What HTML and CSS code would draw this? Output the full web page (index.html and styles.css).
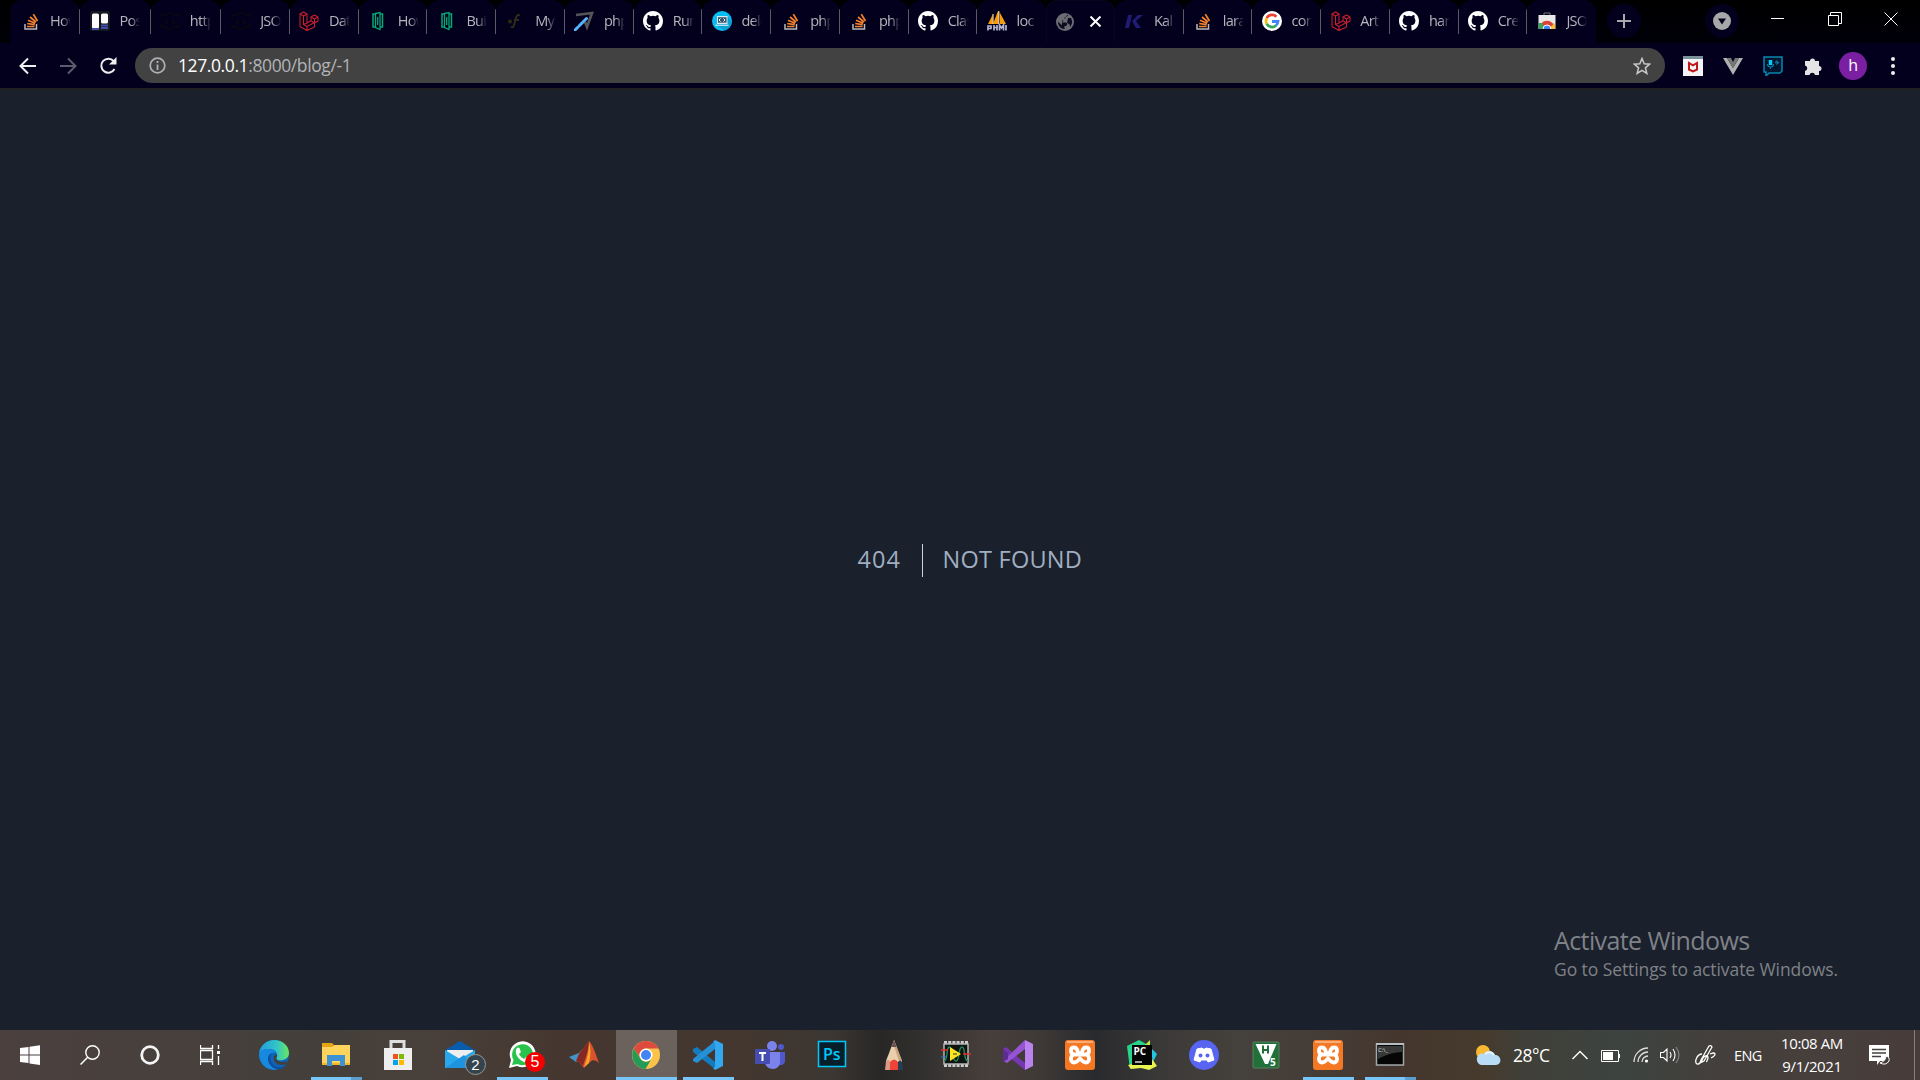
FILE: index.html
```html
<!DOCTYPE html>
<html lang="en">
<head>
<meta charset="utf-8">
<title>Not Found</title>
<link rel="stylesheet" href="styles.css">
</head>
<body>
<svg class="sprite" aria-hidden="true">
  <symbol id="so" viewBox="0 0 20 20"><path d="M4 13v5h11.500v-5" fill="none" stroke="#b9b9bd" stroke-width="1.500"/><path d="M6 15.500h7.500M6.200 12.500l7.500 1.200M7 9.300l7.200 3M9 6l6 5M12.300 3.200l4.200 6.800" stroke="#f4822a" stroke-width="1.700"/></symbol>
  <symbol id="trello" viewBox="0 0 20 20"><rect width="20" height="20" rx="2" fill="#151a20"/><rect x="2" y="2.500" width="7" height="15" rx="1.500" fill="#fff"/><rect x="11" y="2.500" width="7" height="10" rx="1.500" fill="#fff"/><path d="M2 18h7M11 14.500h7M11 17h7" stroke="#4251a7" stroke-width="2"/></symbol>
  <symbol id="json" viewBox="0 0 20 20"><path d="M1 7V4h5l2-2h4l2 2h5v3M1 13v3h5l2 2h4l2-2h5v-3M7 7v5H4M13 7v5h3" fill="none" stroke="#080812" stroke-width="1.700"/></symbol>
  <symbol id="laravel" viewBox="0 0 20 20"><path d="M1 3l3.500-2L8 3v9l4-2.300V6l3.500-2L19 6v4l-3.500 2v4L8 19.500 1 15.500zM1 3l3.500 2L8 3M4.500 5v8.500L8 12m4-6l3.500 2L19 6m-3.500 2v4L12 9.700M4.500 13.500l3.500 2 7.500-4M8 15.500v4" fill="none" stroke="#c9202b" stroke-width="1.050" stroke-linejoin="round"/></symbol>
  <symbol id="book" viewBox="0 0 20 20"><path d="M7 3H5v13h2M12 3h2.500v13H12" fill="none" stroke="#04a875" stroke-width="1.500"/><path d="M7.500 2.500L12 1.500v17l-4.500-2zM9.700 6v8" fill="none" stroke="#04a875" stroke-width="1.300"/></symbol>
  <symbol id="symfony" viewBox="0 0 20 20"><circle cx="4" cy="10.500" r="2" fill="#2d2914"/><path d="M14 4.500c-3-2-4 2-5 6-1 5-2 7-4 5M8 9h5" fill="none" stroke="#302b16" stroke-width="2"/></symbol>
  <symbol id="plane" viewBox="0 0 20 20"><path d="M2 4l16-2-5 14-2-5" fill="none" stroke="#555559" stroke-width="2.700"/><path d="M1 19l3-3M5.500 14.500l7-7" stroke="#56b4ff" stroke-width="3" stroke-linecap="round"/></symbol>
  <symbol id="github" viewBox="0 0 16 16"><path fill="#fff" d="M8 0C3.580 0 0 3.580 0 8c0 3.540 2.290 6.530 5.470 7.590.4.070.55-.17.55-.38 0-.19-.01-.82-.01-1.490-2.010.37-2.530-.49-2.690-.94-.09-.23-.48-.94-.82-1.130-.28-.15-.68-.52-.01-.53.63-.01 1.080.58 1.230.82.72 1.210 1.870.87 2.330.66.07-.52.28-.87.51-1.070-1.780-.2-3.640-.89-3.640-3.950 0-.87.31-1.590.82-2.150-.08-.2-.36-1.020.08-2.120 0 0 .67-.21 2.200.82a7.600 7.600 0 0 1 4 0c1.530-1.040 2.200-.82 2.200-.82.44 1.100.16 1.920.08 2.120.51.56.82 1.270.82 2.150 0 3.070-1.870 3.750-3.650 3.950.29.25.54.73.54 1.480 0 1.070-.01 1.930-.01 2.200 0 .21.15.46.55.38A8 8 0 0 0 16 8c0-4.420-3.580-8-8-8z"/></symbol>
  <symbol id="laptop" viewBox="0 0 20 20"><circle cx="10" cy="10" r="10" fill="#08bdf2"/><path d="M16 6l3.800 5a10 10 0 0 1-7 8.500L4 14z" fill="#07a0d0"/><rect x="5" y="5" width="10.500" height="8" fill="#dce9ef"/><rect x="6" y="6.200" width="8.500" height="5.500" fill="#35566d"/><path d="M8.500 7.500L7 9l1.500 1.500m3-3L13 9l-1.500 1.500M3.500 14.200h13" stroke="#fff" fill="none"/></symbol>
  <symbol id="pma" viewBox="0 0 20 20"><path d="M5.500 4L1 13h5zM11 0L6 13h5zM12.500 1l6.500 12h-6z" fill="#f89c0e"/><path d="M6 3v10M11.700 0v13" stroke="#ffd293" stroke-width="1.200"/><path d="M1 19.500V15h3v2.500H1M7 14v5.500m0-3h3M10 14v5.500m2.500 0V14l2 3 2-3v5.500m2.500 0V14" fill="none" stroke="#b4b4cf" stroke-width="1.700"/></symbol>
  <symbol id="globe" viewBox="0 0 20 20"><circle cx="10" cy="10" r="9" fill="#6b6b73"/><path d="M12.500 2.500c1 2-1 2-2 2.500-2 0 0 3-3 3.500H7v2h4c2 1 1 3 0 3.500H9.500V17C5 17 3 13 3 9.500l4 4v-3M13 6h3c2 4 1 6-1 9 0-3-1-3-3-4" fill="#0b0a20"/></symbol>
  <symbol id="kalk" viewBox="0 0 20 20"><path d="M4 4h4L5 17H1zM14 4h5l-7 6 5 7h-5l-4-7z" fill="#211c73"/></symbol>
  <symbol id="google" viewBox="0 0 20 20"><circle cx="10" cy="10" r="10" fill="#fff"/><g fill="none" stroke-width="2.800"><path d="M14.400 5.800A6 6 0 0 0 4.700 7.200" stroke="#ea4335"/><path d="M4.700 7.200a6 6 0 0 0 0 5.600" stroke="#fbbc05"/><path d="M4.700 12.800a6 6 0 0 0 9.300 1.700" stroke="#34a853"/><path d="M14 14.500a6 6 0 0 0 2-4H10" stroke="#4285f4"/></g></symbol>
  <symbol id="store" viewBox="0 0 20 20"><path d="M7 4V2h6v2" fill="none" stroke="#777"/><path d="M1.500 4h17v14h-17z" fill="#e9e9e9"/><path d="M2 17.800a8 8 0 0 1 16 0" fill="#db4437"/><path d="M2 12v6h6l-3-6z" fill="#34a853"/><path d="M18 12v6h-7z" fill="#fbc02d"/><path d="M6 18a4 4 0 0 1 8 0" fill="#4285f4" stroke="#fff"/></symbol>

  <symbol id="edge" viewBox="0 0 30 30"><defs><linearGradient id="eg"><stop stop-color="#219ddd"/><stop offset=".6" stop-color="#32c5c8"/><stop offset="1" stop-color="#6be75c"/></linearGradient></defs><circle cx="15" cy="15" r="15" fill="#0c65ba"/><path d="M0 14C1 5 8 0 15 0c9 0 15 6 15 13 0 6-6 8-11 7-3-1-1-3-1-5 0-4-4-6-8-6C5 9 1 11 0 14z" fill="url(#eg)"/><path d="M0 14c1-3 5-5 9-5 3 0 6 1 8 4-8-2-10 5-6 11 2 3 5 5 8 5-10 3-19-5-19-15z" fill="#1789df"/><path d="M13 14c-4 5 0 13 8 13 3 0 5-1 7-3-4 8-15 6-18-1-2-4-1-8 3-9z" fill="#104f9c"/><path d="M18 14c1 3-2 4 0 6 3 3 7 2 10 1l-1 3c-8 3-14-2-12-8z" fill="#463e3a"/></symbol>
  <symbol id="folder" viewBox="0 0 30 30"><path d="M1 3h10l2 2h15v20H1z" fill="#e4a413"/><path d="M1 7h10l3-2h15v20H1z" fill="#ffd45d"/><path d="M1 23h28v2H1z" fill="#edb62d"/><path d="M6 26V15h18v11h-5v-5h-8v5z" fill="#3d91d4"/></symbol>
  <symbol id="msstore" viewBox="0 0 30 30"><path d="M8 10V1.500h13V10" fill="none" stroke="#ddd" stroke-width="3"/><path d="M1 8h28v22H1z" fill="#eee"/><path d="M10 14h5v5h-5z" fill="#f25022"/><path d="M16 14h5v5h-5z" fill="#7fba00"/><path d="M10 20h5v5h-5z" fill="#00a4ef"/><path d="M16 20h5v5h-5z" fill="#ffb900"/></symbol>
  <symbol id="mail" viewBox="0 0 30 30"><path d="M0 10L15 1l15 9v18H0z" fill="#0a5baa"/><path d="M2 10h26v10H2z" fill="#eee"/><path d="M0 10l15 9 15-9v18H0z" fill="#28a8ea"/><path d="M0 28l19-13 11 13z" fill="#1e94e1"/></symbol>
  <symbol id="whatsapp" viewBox="0 0 30 30"><path d="M2 28l2-8a13 13 0 1 1 6 6z" fill="#fff"/><path d="M5 25l1.500-5a10.500 10.500 0 1 1 4.200 4z" fill="#27c34b"/><path d="M10 8c3-2 3 2 4 4l-2 2c1 2 3 4 5 5l2-2 4 2c0 4-5 4-8 2-5-3-8-9-5-13z" fill="#fff"/></symbol>
  <symbol id="matlab" viewBox="0 0 30 30"><path d="M0 17l10-4 6-6-5 13-4 2z" fill="#4295c9"/><path d="M10 14l10-13c4 4 7 14 10 22-3-3-6-4-9-1l-6 6-5-6-3-1z" fill="#d9532c"/><path d="M10 14l10-13c0 9-4 18-6 25l-4-4-3-1z" fill="#852823"/><path d="M20 2c2 6 2 13 0 21-2 1-3 3-5 4 3-8 5-16 5-25z" fill="#f7a52a"/></symbol>
  <symbol id="chrome" viewBox="0 0 30 30"><circle cx="15" cy="15" r="14" fill="#fbc34a"/><path d="M2.700 8.500A14 14 0 0 1 27.500 8.500H15A6.500 6.500 0 0 0 9 17.500z" fill="#dd4b3e"/><path d="M2.800 8.500A14 14 0 0 0 14.500 29l6.200-10.500A6.500 6.500 0 0 1 9.400 18.500z" fill="#249b57"/><circle cx="15" cy="15" r="6.500" fill="#fff"/><circle cx="15" cy="15" r="5" fill="#4384f3"/></symbol>
  <symbol id="vscode" viewBox="0 0 30 30"><path d="M0 9l4-2 18 15v7L0 12z" fill="#167bbd"/><path d="M22 1v8L4 23l-4-2v-2z" fill="#2590d6"/><path d="M22 0l8 4v22l-8 4-2-2 2-1V3l-2-1z" fill="#31a8ef"/></symbol>
  <symbol id="teams" viewBox="0 0 30 30"><circle cx="17" cy="6" r="5" fill="#7b83eb"/><circle cx="26" cy="7" r="3" fill="#5059c9"/><path d="M21 12h9v9c0 3-3 5-7 4z" fill="#5059c9"/><path d="M9 12h16v10c0 4-3 7-7 7s-8-3-8-7z" fill="#7b83eb"/><rect y="9" width="15" height="15" rx="1" fill="#454db0"/><path d="M4 13h7M7.500 13v8" stroke="#fff" stroke-width="2"/></symbol>
  <symbol id="pencil" viewBox="0 0 30 30"><path d="M15 0l8 21v9H7v-9z" fill="#e9cfaa"/><path d="M15 0l8 21h-3L15 6z" fill="#c9a37e"/><path d="M15 0l2.500 7h-5z" fill="#665250"/><path d="M7 21q2-2 4 0v9H6z" fill="#d99a81"/><path d="M11 22q4-5 8 0v8h-8z" fill="#ed4338"/><path d="M19 22q2-3 4 0l1 8h-5z" fill="#273e52"/></symbol>
  <symbol id="multisim" viewBox="0 0 30 30"><path d="M3 2.500h24M3 25.500h24" stroke="#ccc" stroke-width="3" stroke-dasharray="3 1.200"/><rect x="3" y="4" width="24" height="20" fill="#0d1412" stroke="#b5b5b5" stroke-width="1.500"/><path d="M3 21c4 0 2-13 5-14s3 14 7 14 2-14 6-14 1 14 6 14" fill="none" stroke="#278355" stroke-width="1.500"/><path d="M9 7l11 7-11 7z" fill="#ffe61e"/><path d="M12 14h4" stroke="#333"/><path d="M0 10h7M22 14h8" stroke="#e52929" stroke-width="1.500"/><path d="M0 17h6" stroke="#287bc7"/></symbol>
  <symbol id="vs" viewBox="0 0 30 30"><path d="M0 9l3-2 20 17-1 6L0 12z" fill="#7636b2"/><path d="M0 21L22 0v9L4 23z" fill="#9555d3"/><path d="M0 9l5 4v6l-5 3z" fill="#5c2d91"/><path d="M22 0l8 4v22l-8 4z" fill="#bb81ed"/></symbol>
  <symbol id="xampp" viewBox="0 0 30 30"><rect width="30" height="30" rx="3" fill="#f47824"/><path d="M2 2h26" stroke="#f8ad78" stroke-width="2"/><path d="M13.500 13.500C12.500 10 12 7.500 9 7.500c-4 0-4 6 0 7h12c4-1 4-7 0-7-3 0-3.500 2.500-4.500 6M9 14.500c-4 1-4 8 0 8 3 0 4-1.500 6-4 2 2.500 3 4 6 4 4 0 4-7 0-8" fill="none" stroke="#fff" stroke-width="3.800" stroke-linejoin="round"/></symbol>
  <symbol id="discord" viewBox="0 0 30 30"><circle cx="15" cy="15" r="15" fill="#5865f2"/><path d="M8 9l5-1 1 1h2l1-1 5 1 3 11-6 2-1-2h-6l-1 2-6-2z" fill="#fff" stroke="#fff" stroke-linejoin="round"/><circle cx="11.500" cy="15.500" r="2" fill="#5865f2"/><circle cx="18.500" cy="15.500" r="2" fill="#5865f2"/></symbol>
</svg>

<header class="browser">
  <div class="strip">
    <div class="tabs">
      <div class="tab wide first"><svg class="fav"><use href="#so"/></svg><span>How</span></div>
      <div class="tab wide"><svg class="fav"><use href="#trello"/></svg><span>Post</span></div>
      <div class="tab wide"><svg class="fav"><use href="#json"/></svg><span>http</span></div>
      <div class="tab"><svg class="fav"><use href="#json"/></svg><span>JSO</span></div>
      <div class="tab"><svg class="fav"><use href="#laravel"/></svg><span>Dat</span></div>
      <div class="tab"><svg class="fav"><use href="#book"/></svg><span>How</span></div>
      <div class="tab"><svg class="fav"><use href="#book"/></svg><span>Buil</span></div>
      <div class="tab"><svg class="fav"><use href="#symfony"/></svg><span>My</span></div>
      <div class="tab"><svg class="fav"><use href="#plane"/></svg><span>php</span></div>
      <div class="tab"><svg class="fav"><use href="#github"/></svg><span>Run</span></div>
      <div class="tab"><svg class="fav"><use href="#laptop"/></svg><span>dele</span></div>
      <div class="tab"><svg class="fav"><use href="#so"/></svg><span>php</span></div>
      <div class="tab"><svg class="fav"><use href="#so"/></svg><span>php</span></div>
      <div class="tab"><svg class="fav"><use href="#github"/></svg><span>Clas</span></div>
      <div class="tab before"><svg class="fav"><use href="#pma"/></svg><span>loc</span></div>
      <div class="tab active"><svg class="fav"><use href="#globe"/></svg><svg class="close" viewBox="0 0 10 10"><path d="M.5.5l9 9m0-9l-9 9" stroke="#fff" stroke-width="1.800"/></svg></div>
      <div class="tab"><svg class="fav"><use href="#kalk"/></svg><span>Kal</span></div>
      <div class="tab"><svg class="fav"><use href="#so"/></svg><span>lara</span></div>
      <div class="tab"><svg class="fav"><use href="#google"/></svg><span>con</span></div>
      <div class="tab"><svg class="fav"><use href="#laravel"/></svg><span>Art</span></div>
      <div class="tab"><svg class="fav"><use href="#github"/></svg><span>har</span></div>
      <div class="tab"><svg class="fav"><use href="#github"/></svg><span>Cre</span></div>
      <div class="tab last"><svg class="fav"><use href="#store"/></svg><span>JSO</span></div>
    </div>
    <div class="round plus"><svg width="16" height="16"><path d="M8 1v14M1 8h14" stroke="#a9a9ad" stroke-width="2"/></svg></div>
    <div class="round search"><svg width="18" height="18"><circle cx="9" cy="9" r="9" fill="#a7a7a9"/><path d="M5 6.500h8L9 12.500z" fill="#03001c"/></svg></div>
    <div class="window-buttons">
      <svg width="14" height="14"><path d="M0 6.500h13" stroke="#fff"/></svg>
      <svg width="14" height="14"><path d="M.5 3.500h10v10H.5zM2.500 3V.5h11v11H11" fill="none" stroke="#fff"/></svg>
      <svg width="14" height="14"><path d="M.5.500l13 13m0-13l-13 13" stroke="#fff"/></svg>
    </div>
  </div>
  <div class="toolbar">
    <div class="nav">
      <svg width="18" height="18"><path d="M17 9H2m7-7.500L1.500 9 9 16.500" fill="none" stroke="#eee" stroke-width="2"/></svg>
      <svg width="18" height="18"><path d="M1 9h15M9 1.500L16.500 9 9 16.500" fill="none" stroke="#5c5c6c" stroke-width="2"/></svg>
      <svg width="18" height="18"><path d="M14.700 4.200A7 7 0 1 0 15.500 12" fill="none" stroke="#eee" stroke-width="2"/><path d="M17.500 0v7.500H10z" fill="#eee"/></svg>
    </div>
    <div class="omnibox">
      <svg width="17" height="17"><circle cx="8.500" cy="8.500" r="7.300" fill="none" stroke="#adb0b4" stroke-width="1.700"/><path d="M8.500 7.500V13M8.500 4v2" stroke="#adb0b4" stroke-width="1.800"/></svg>
      <div class="url"><b>127.0.0.1</b>:8000/blog/-1</div>
      <svg class="star" width="18" height="18"><path d="M9 1.500l2.200 5.300 5.500.4-4.300 3.600 1.400 5.600L9 13.300l-4.800 3.100 1.400-5.600-4.300-3.600 5.500-.4z" fill="none" stroke="#c9c9c9" stroke-width="1.500"/></svg>
    </div>
    <div class="extensions">
      <svg width="20" height="20"><path d="M0 0h20v20H0z" fill="#f4f4f4"/><path d="M0 0h20v3H0z" fill="#78919b"/><path d="M6 13.500V7l4 2.300L14 7v6.500l-4 1.800z" fill="none" stroke="#c01818" stroke-width="2"/></svg>
      <svg width="20" height="20"><path d="M0 2h4l6 10 6-10h4L10 19z" fill="#b0b0b0"/><path d="M4 2h4l2 4 2-4h4l-6 10z" fill="#777"/></svg>
      <svg width="20" height="20"><path d="M1 1h18v14l-2 2H6l-3 3v-4H1z" fill="#03152e" stroke="#0587af" stroke-width="1.500"/><path d="M7.500 4v5" stroke="#08caff" stroke-width="3.500"/><path d="M4.500 8c0 4 6 4 6 0M7.500 11v2M12 7l2-2v3l2-2" fill="none" stroke="#087da6" stroke-width="1.100"/></svg>
      <svg width="20" height="20"><path d="M2 5h5a2.500 2.500 0 1 1 5 0h4v5a2.500 2.500 0 1 1 0 5v4h-4a2.800 2.800 0 0 0-5.500 0H2v-4a2.800 2.800 0 0 0 0-5.500z" fill="#e4e4e6"/></svg>
      <div class="avatar">h</div>
      <svg width="20" height="20"><g fill="#eee"><circle cx="10" cy="3" r="2"/><circle cx="10" cy="10" r="2"/><circle cx="10" cy="17" r="2"/></g></svg>
    </div>
  </div>
</header>

<main class="page">
  <div class="error"><div class="code">404</div><div class="message">NOT FOUND</div></div>
  <aside class="watermark"><div class="wm-title">Activate Windows</div><div class="wm-text">Go to Settings to activate Windows.</div></aside>
</main>

<footer class="taskbar">
  <div class="system">
    <svg width="20" height="20"><path d="M0 3l8.500-1v7.500H0zM9.500 1.800L20 .3v9.200H9.500zM0 10.500h8.500V18L0 17zM9.500 10.500H20V20L9.500 18.500z" fill="#fff"/></svg>
    <svg width="20" height="20"><circle cx="12.500" cy="7.500" r="6.700" fill="none" stroke="#fff" stroke-width="1.400"/><path d="M7.700 12.300L.5 19.500" stroke="#fff" stroke-width="1.500"/></svg>
    <svg width="20" height="20"><circle cx="10" cy="10" r="8.300" fill="none" stroke="#f4f4f4" stroke-width="2.800"/></svg>
    <svg width="20" height="20"><path d="M.5 0v3.500h12V0M.5 5.500h12v9H.5zM.5 20v-3.500h12V20M18.500 0v4M18.500 11v9" fill="none" stroke="#fff" stroke-width="1.300"/><path d="M17 6h3v3h-3z" fill="#fff"/></svg>
  </div>
  <div class="apps">
    <div class="app"><svg><use href="#edge"/></svg></div>
    <div class="app open multi"><svg><use href="#folder"/></svg></div>
    <div class="app"><svg><use href="#msstore"/></svg></div>
    <div class="app"><svg><use href="#mail"/></svg><i class="badge dark">2</i></div>
    <div class="app open"><svg><use href="#whatsapp"/></svg><i class="badge red">5</i></div>
    <div class="app"><svg><use href="#matlab"/></svg></div>
    <div class="app open current"><svg><use href="#chrome"/></svg></div>
    <div class="app open"><svg><use href="#vscode"/></svg></div>
    <div class="app"><svg><use href="#teams"/></svg></div>
    <div class="app"><svg viewBox="0 0 30 30"><rect x="1.500" y="1.500" width="27" height="25" fill="#061e2a" stroke="#00c8ff" stroke-width="1.500"/><text x="6" y="20" font-size="16" font-weight="600" fill="#00c8ff">Ps</text></svg></div>
    <div class="app"><svg><use href="#pencil"/></svg></div>
    <div class="app"><svg><use href="#multisim"/></svg></div>
    <div class="app"><svg><use href="#vs"/></svg></div>
    <div class="app"><svg><use href="#xampp"/></svg></div>
    <div class="app"><svg viewBox="0 0 30 30"><path d="M0 6L12 0l9 5-3 17L3 29z" fill="#28d48b"/><path d="M18 5l5-5v7z" fill="#b7ec42"/><path d="M23 7l7 7-4 8z" fill="#21c7e2"/><path d="M1 25l24-6 5 7-8 4-8-2-10 1z" fill="#e9f44f"/><rect x="5" y="5" width="20" height="20" fill="#050505"/><text x="6.500" y="15" font-size="10" font-weight="700" fill="#fff">PC</text><path d="M8 22h7" stroke="#fff" stroke-width="1.300"/></svg></div>
    <div class="app"><svg><use href="#discord"/></svg></div>
    <div class="app"><svg viewBox="0 0 30 30"><rect x="2" y="2" width="26" height="26" rx="1" fill="#216f39" stroke="#59815f"/><path d="M4.500 4h21L17 24h-3z" fill="#fff"/><path d="M12 5.500v8m0-3.500h5m0-4.500v8" fill="none" stroke="#216f39" stroke-width="2"/><text x="19" y="25.500" font-size="10" font-weight="700" fill="#fff">5</text></svg></div>
    <div class="app open"><svg><use href="#xampp"/></svg></div>
    <div class="app open multi"><svg viewBox="0 0 30 30"><rect x="1.500" y="4" width="27" height="21" fill="#060606" stroke="#a1a8ab" stroke-width="1.500"/><path d="M3 6h24v6Q16 12 3 19z" fill="#373838"/><path d="M1 4h28" stroke="#b5bdc0" stroke-width="2"/><text x="3" y="12" font-size="6" fill="#ddd">C:\_</text></svg></div>
  </div>
  <div class="tray">
    <svg class="weather" width="26" height="20"><circle cx="8" cy="7" r="7" fill="#f8b832"/><path d="M6 20a6 6 0 0 1-1-11c2-1 3 0 4 0 2-4 9-4 11 1 7 0 7 10 1 10z" fill="#b8dcf6"/><path d="M10 9c3-3 7-2 9 1" stroke="#e5f3fd" fill="none" stroke-width="2"/></svg>
    <div class="temp">28°C</div>
    <svg class="chevron" width="16" height="10"><path d="M.5 9L8 1.500 15.500 9" fill="none" stroke="#fff" stroke-width="1.400"/></svg>
    <svg class="battery" width="19" height="12"><path d="M.5.5h17v11H.5z" fill="none" stroke="#fff"/><path d="M2 2h10v8H2zM18 4h1v4h-1z" fill="#fff"/></svg>
    <svg class="wifi" width="16" height="16"><path d="M1 15A14 14 0 0 1 15 1M5 15A10 10 0 0 1 15 5M9 15a6 6 0 0 1 6-6" fill="none" stroke="#ddd" stroke-width="1.300"/><circle cx="13.500" cy="14" r="1.600" fill="#fff"/></svg>
    <svg class="volume" width="21" height="18"><path d="M.5 6.500h3L7 3v12l-3.500-3.500h-3zM10 6q2 3 0 6m3-9q4 6 0 12" fill="none" stroke="#fff" stroke-width="1.100"/><path d="M16 1q6 8 0 16" fill="none" stroke="#888" stroke-width="1.100"/></svg>
    <svg class="pen" width="21" height="20"><path d="M6 15L14 1q2-1 3 1L9 16l-4 2zM7 9c-5 0-8 8-5 10 2 1 5-3 6-6 2-3 5-3 5 0 0 2-2 3-1 4m3-8q5-2 5 0t-4 4" fill="none" stroke="#fff" stroke-width="1.300"/></svg>
    <div class="lang">ENG</div>
    <div class="clock"><div>10:08 AM</div><div>9/1/2021</div></div>
    <svg class="notes" width="21" height="21"><path d="M0 0h20v16h-9l-3 4v-4H0z" fill="#fff"/><path d="M3 4.500h14M3 8h14M3 11.500h9" stroke="#45403d" stroke-width="1.300"/><path d="M17 11q0 5-6 7 6 3 9-2 1-4-3-5z" fill="#45403d" stroke="#fff"/></svg>
    <div class="desktop"></div>
  </div>
</footer>
</body>
</html>
```

FILE: styles.css
```css
* { box-sizing: border-box; }
body {
  margin: 0;
  width: 1920px;
  height: 1080px;
  overflow: hidden;
  display: flex;
  flex-direction: column;
  background: #1a202c;
  font-family: "Open Sans", "Noto Sans", sans-serif;
}
svg { display: block; flex: none; }
.sprite { position: absolute; width: 0; height: 0; }

.browser { height: 90px; background: #03001e; border-bottom: 2px solid #202022; flex: none; }
.strip {
  height: 43px;
  display: flex;
  background: linear-gradient(#000, #000008);
}
.tabs { display: flex; padding-left: 10px; width: 1596px; }
.tab {
  width: 68.75px;
  height: 43px;
  display: flex;
  align-items: center;
  padding: 0 0 1px 9.5px;
  border-radius: 12px 12px 0 0;
  background: linear-gradient(#5b5a66, #5b5a66) right 0 top 9px / 1px 25px no-repeat, #03001e;
  flex: none;
}
.tab.wide { width: 70.4px; }
.tab.first { padding-left: 10.5px; }
.tab.before, .tab.active, .tab.last { background: #03001e; }
.tab.active { border: 1px solid #08061c; border-width: 1px 1px 0; padding-left: 8px; }
.fav { width: 20px; height: 20px; }
.tab span {
  margin-left: 9.5px;
  width: 21px;
  overflow: hidden;
  white-space: nowrap;
  font-size: 14.5px;
  line-height: 20px;
  letter-spacing: -0.7px;
  color: #b5b5bb;
  mask-image: linear-gradient(90deg, #000 55%, transparent);
}
.close { width: 11px; height: 11px; margin-left: 14.5px; }
.round {
  width: 34px;
  height: 34px;
  border-radius: 50%;
  background: #03001e;
  display: flex;
  align-items: center;
  justify-content: center;
}
.plus { margin: 4px 0 0 11px; }
.search { margin: 4px 0 0 64px; }
.window-buttons { display: flex; gap: 42.5px; margin: 12px 0 0 32px; }

.toolbar { height: 45px; display: flex; align-items: center; }
.nav { width: 135px; display: flex; gap: 22px; padding-left: 18.5px; }
.omnibox {
  width: 1530px;
  height: 35px;
  border-radius: 18px;
  background: #424242;
  display: flex;
  align-items: center;
  padding: 0 14px 0 14px;
}
.url { margin: -2px 0 0 12px; font-size: 17.5px; line-height: 24px; letter-spacing: -0.4px; color: #b1b3b6; }
.url b { font-weight: 400; color: #fff; }
.star { margin-left: auto; }
.extensions { display: flex; align-items: center; gap: 20.200px; margin-left: 17.5px; }
.avatar {
  width: 28px;
  height: 28px;
  margin: 0 -4px;
  border-radius: 50%;
  background: #7b1fa2;
  color: #fff;
  text-align: center;
  font-size: 16px;
  line-height: 27px;
}

.page { flex: 1; position: relative; display: flex; align-items: center; justify-content: center; }
.error { display: flex; margin-left: 21px; color: #a0aec0; font-size: 23.5px; line-height: 31px; height: 33px; }
.code { width: 85px; padding-left: 20px; border-right: 1px solid #cbd5e0; letter-spacing: 1.1px; }
.message { width: 181px; padding-left: 20px; letter-spacing: 0.25px; white-space: nowrap; }
.watermark { position: absolute; left: 1554px; top: 833px; color: #7f8287; white-space: nowrap; }
.wm-title { font-size: 25px; line-height: 34px; letter-spacing: -0.6px; }
.wm-text { font-size: 17.5px; line-height: 25px; letter-spacing: -0.08px; }

.taskbar {
  height: 50px;
  flex: none;
  display: flex;
  background: linear-gradient(90deg, #4b403e 0, #47403c 170px, #443f3a 330px, #49403b 430px, #45372f 560px, #43372f 750px, #3c3732 830px, #282726 880px, #343231 930px, #483f3a 990px, #3e3937 1040px, #292a2d 1095px, #3b3938 1160px, #45413c 1240px, #453b35 1340px, #44362d 1400px, #463a2d 1480px, #404039 1530px, #3d4340 1620px, #443f3c 1730px, #473f3c 1850px, #483b38 1920px);
}
.system { display: flex; width: 243px; }
.system svg { margin: 15px 20px; }
.apps { display: flex; }
.app { position: relative; width: 62px; height: 50px; display: flex; justify-content: center; padding-top: 10px; }
.app svg { width: 30px; height: 30px; }
.open { background: linear-gradient(#76c5fb, #76c5fb) 6px bottom / 51px 3px no-repeat; }
.multi { background: linear-gradient(90deg, #76c5fb 40px, #5b9dce 40px) 6px bottom / 51px 3px no-repeat; }
.current { background: linear-gradient(#76c5fb, #76c5fb) 1px bottom / 61px 3px no-repeat, linear-gradient(#6b625d, #6b625d) 1px 0 / 61px 50px no-repeat; }
.badge {
  position: absolute;
  left: 34px;
  top: 22px;
  width: 20px;
  height: 20px;
  border-radius: 50%;
  color: #fff;
  font: 16px/20px "Liberation Sans", sans-serif;
  text-align: center;
}
.red { background: #f40000; }
.dark { left: 36px; top: 24px; width: 21px; height: 21px; background: #34434c; border: 1px solid #999; line-height: 19px; font-size: 15px; }
.tray { flex: 1; display: flex; align-items: center; color: #fff; font-size: 14.5px; padding-left: 54px; white-space: nowrap; }
.temp { width: 61px; padding-left: 12px; font-size: 17.5px; letter-spacing: -0.5px; }
.chevron { margin-left: 10px; }
.battery { margin: 1px 0 0 13px; }
.wifi { margin-left: 13px; }
.volume { margin-left: 11px; }
.pen { margin-left: 14px; }
.lang { width: 32px; margin-left: 18px; font-size: 14.5px; letter-spacing: -0.6px; }
.clock { width: 80px; margin-left: 6px; text-align: center; font-size: 15px; line-height: 23px; letter-spacing: -0.4px; }
.notes { margin-left: 17px; }
.desktop { margin-left: auto; width: 6px; height: 50px; border-left: 1px solid #85807e; }
```
